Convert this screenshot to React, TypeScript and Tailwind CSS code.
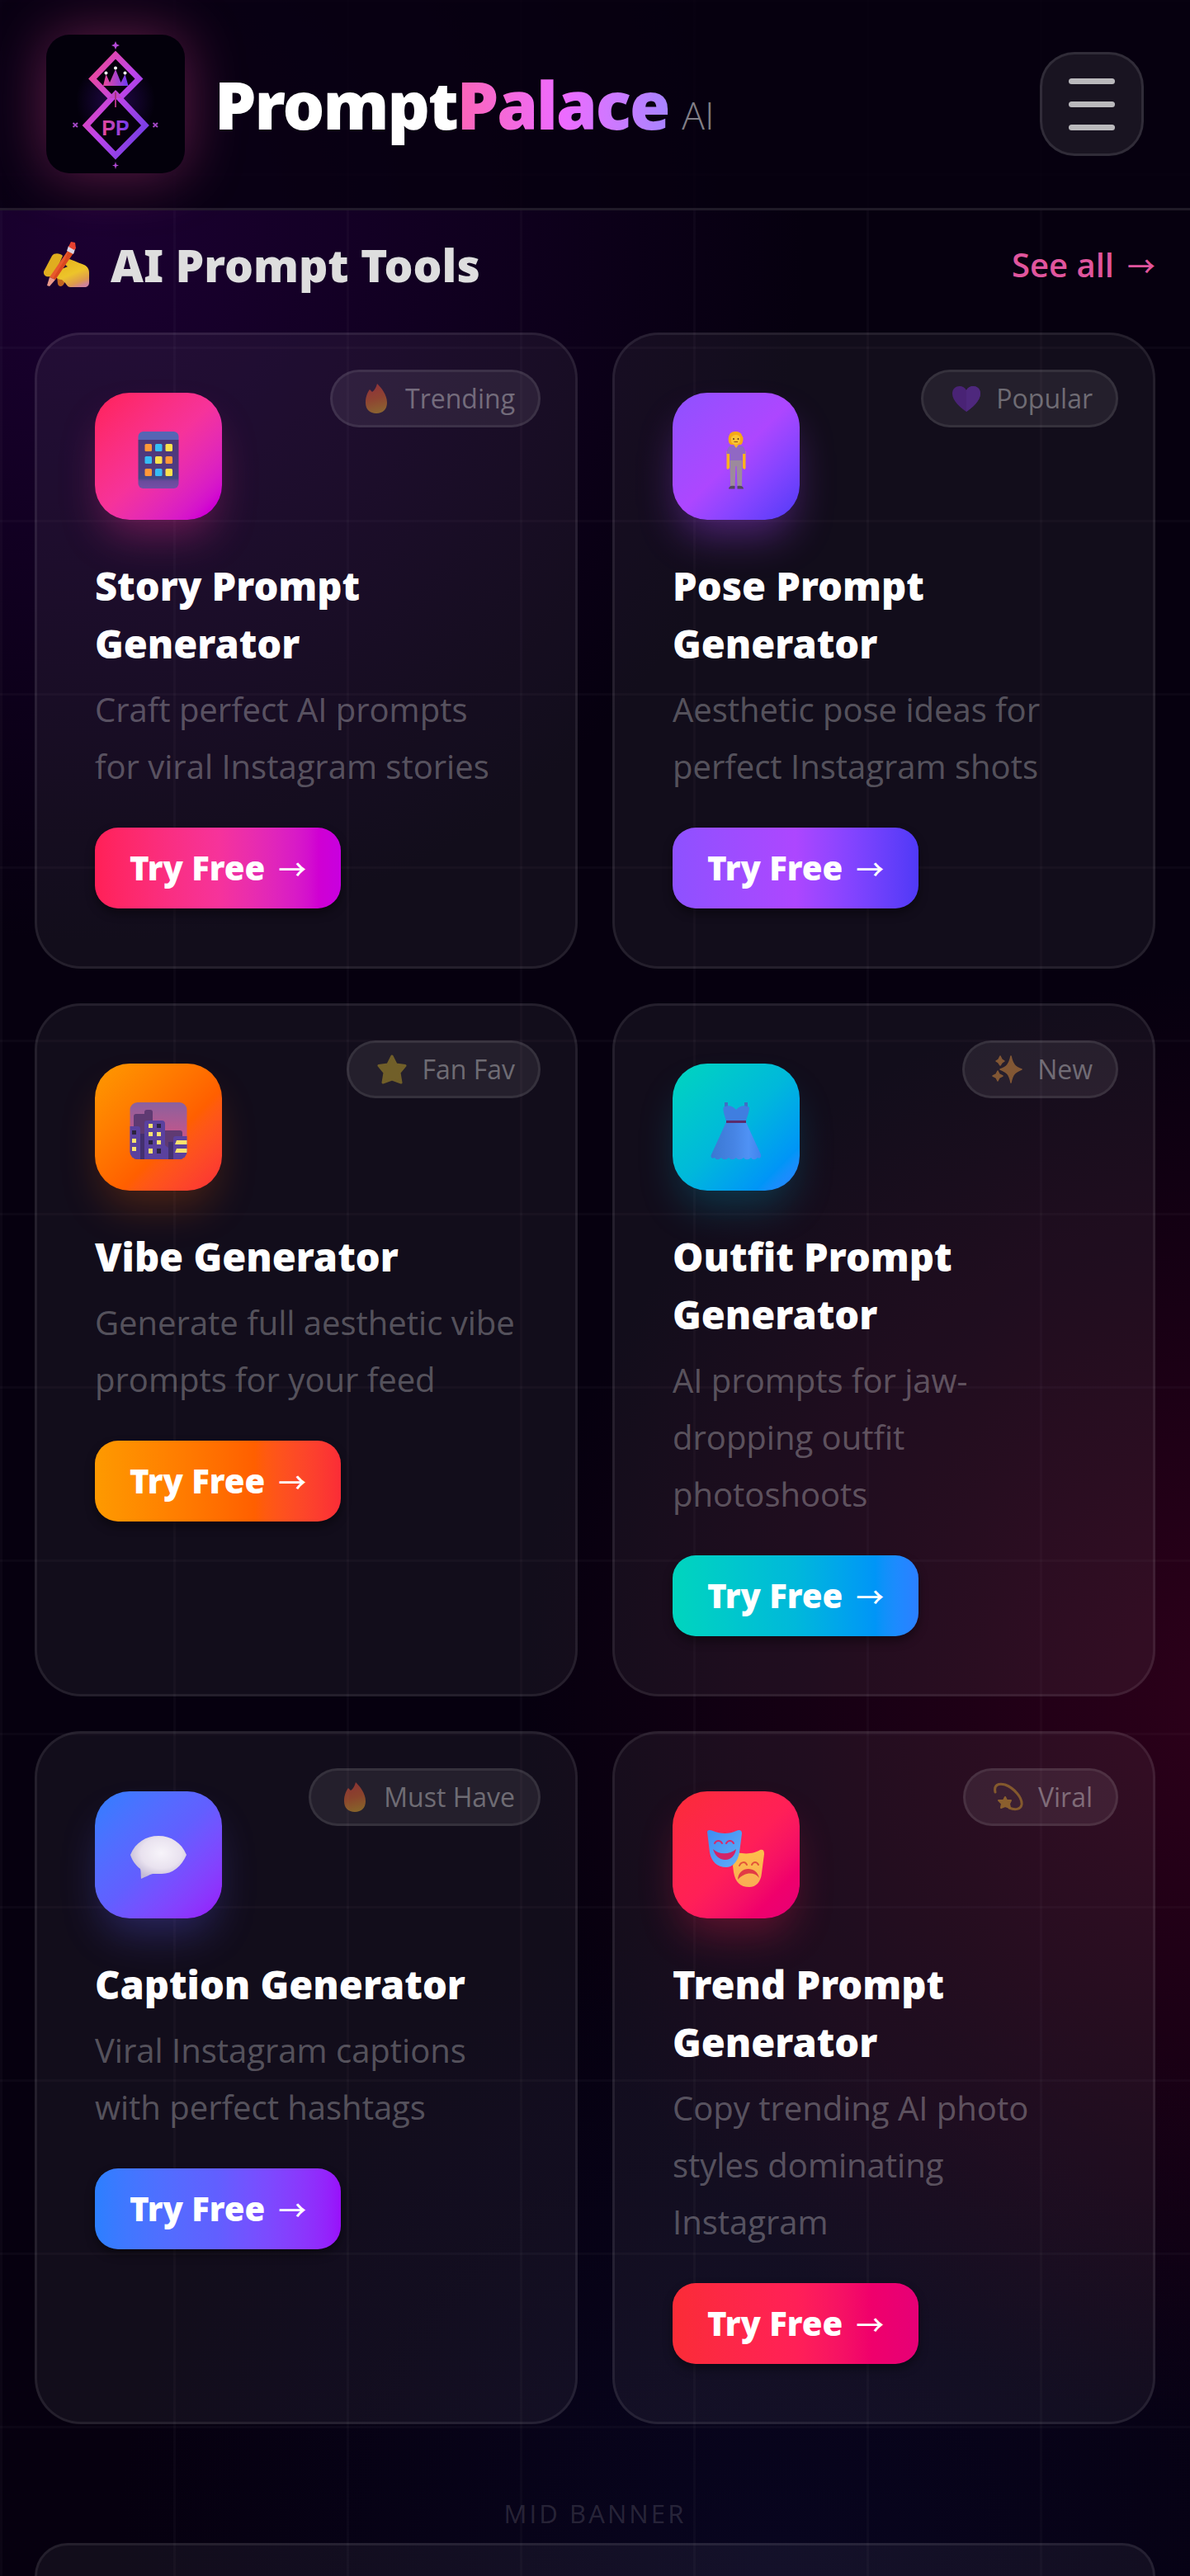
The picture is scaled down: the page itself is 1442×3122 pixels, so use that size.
import type { ReactNode } from 'react';

interface Tool {
  id: string;
  title: string;
  description: string;
  badge: string;
  badgeIcon: ReactNode;
  icon: ReactNode;
  iconClass: string;
  buttonClass: string;
}

function Logo() {
  return (
    <svg viewBox="0 0 168 168" className="h-full w-full" role="img" aria-label="PromptPalace logo">
      <defs>
        <linearGradient id="logo-stroke" gradientUnits="userSpaceOnUse" x1="44" y1="60" x2="124" y2="104">
          <stop offset="0" stopColor="#ec4899" />
          <stop offset="0.5" stopColor="#c044ea" />
          <stop offset="1" stopColor="#7c3fe4" />
        </linearGradient>
        <linearGradient id="logo-crown" x1="0" y1="0" x2="1" y2="0">
          <stop offset="0" stopColor="#ec4899" />
          <stop offset="1" stopColor="#6d3bf5" />
        </linearGradient>
        <radialGradient id="logo-glow">
          <stop offset="0" stopColor="#2a0a5c" stopOpacity="0.8" />
          <stop offset="1" stopColor="#2a0a5c" stopOpacity="0" />
        </radialGradient>
      </defs>
      <circle cx="84" cy="80" r="48" fill="url(#logo-glow)" />
      <path d="M84 24.500 L112.500 53.500 L84 82 L56 53.500 Z" fill="#05000d" stroke="url(#logo-stroke)" strokeWidth="7" />
      <path d="M84 72 L120 110 L84 146.500 L48.500 110 Z" fill="#05000d" stroke="url(#logo-stroke)" strokeWidth="7" />
      <path d="M69 62 L72.500 48 L77 58 L84 42 L90.500 58 L95.500 48 L99.500 62 Z" fill="url(#logo-crown)" />
      <circle cx="72.500" cy="46.500" r="2" fill="#fff" />
      <circle cx="84" cy="40.500" r="2" fill="#fff" />
      <circle cx="95.500" cy="46.500" r="2" fill="#fff" />
      <path d="M84 68 L92 77 L76 77 Z" fill="#c044c8" />
      <rect x="83" y="70" width="2" height="18" fill="#a8327e" />
      <text
        x="84"
        y="122"
        textAnchor="middle"
        fontFamily="Liberation Sans, sans-serif"
        fontWeight="700"
        fontSize="25"
        fill="url(#logo-crown)"
      >
        PP
      </text>
      <path d="M84 8 L85.500 11.500 L89 13 L85.500 14.500 L84 18 L82.500 14.500 L79 13 L82.500 11.500 Z" fill="#b34ad6" />
      <path d="M84 154 L85 157.500 L88 158.500 L85 159.500 L84 163 L83 159.500 L80 158.500 L83 157.500 Z" fill="#b34ad6" />
      <path d="M32.500 107 L38 112 M38 107 L32.500 112 M129.500 107 L135 112 M135 107 L129.500 112" stroke="#a347c4" strokeWidth="2" />
    </svg>
  );
}

function WritingHand() {
  return (
    <svg viewBox="0 0 56 56" className="h-14 w-14 shrink-0" aria-hidden="true">
      <defs>
        <linearGradient id="hand-skin" x1="0.200" y1="0" x2="0.700" y2="1">
          <stop offset="0" stopColor="#e5b21c" />
          <stop offset="0.550" stopColor="#edc42a" />
          <stop offset="0.850" stopColor="#dd9a4e" />
          <stop offset="1" stopColor="#d08398" />
        </linearGradient>
      </defs>
      <path d="M11 17 C14 13 21 14 24 17 L14 40 C8 44 0 43 1 36 Z" fill="#e0ad1f" />
      <path d="M17 42 L26 40 L26 50 C24 55 19 55 18 51 Z" fill="#c2661f" />
      <path
        d="M28 20 C34 21 42 25 50 28 C54 30 56 33 56 38 V49 C56 53 54 55 50 55 H33 C30 55 29 52 27 50 L23 46 C17 46 14 42 16 38 C18 34 26 32 30 30 C26 28 25 24 28 20 Z"
        fill="url(#hand-skin)"
      />
      <path d="M32 8 L38 12 L15 46 L8 43 Z" fill="#e8592c" />
      <path d="M32 8 L27 21 L12 45 L15 46 L38 12 Z" fill="#d9481f" />
      <path d="M31 5 L39 9 L37 15 L29 11 Z" fill="#d9d3e2" />
      <path d="M34 0 L39 1 L40 8 L38 10 L31 6 Z" fill="#e8412f" />
      <path d="M8 43 L15 46 L8 54 L5 53 Z" fill="#eb9a8c" />
    </svg>
  );
}

function Phone() {
  const colors = ['#ff9838', '#35bdf5', '#fbe24c', '#35bdf5', '#fbe24c', '#ff9838', '#ff9838', '#35bdf5', '#fbe24c'];
  return (
    <svg viewBox="0 0 72 72" className="h-18 w-18" aria-hidden="true">
      <defs>
        <linearGradient id="phone-body" x1="0" y1="0" x2="0" y2="1">
          <stop offset="0" stopColor="#5665b4" />
          <stop offset="0.140" stopColor="#5665b4" />
          <stop offset="0.150" stopColor="#4d3779" />
          <stop offset="0.650" stopColor="#4f3c80" />
          <stop offset="0.820" stopColor="#414a86" />
          <stop offset="0.870" stopColor="#6a4a9c" />
          <stop offset="1" stopColor="#7350a6" />
        </linearGradient>
      </defs>
      <rect x="11.500" y="2" width="49" height="69" rx="6" fill="url(#phone-body)" />
      {colors.map((color, i) => (
        <rect key={i} x={19.5 + (i % 3) * 12.5} y={17 + Math.floor(i / 3) * 15} width="8.500" height="9" rx="1.500" fill={color} />
      ))}
    </svg>
  );
}

function Person() {
  return (
    <svg viewBox="0 0 72 72" className="h-18 w-18" aria-hidden="true">
      <path d="M28 6 C29 1 42 0 43 7 C46 9 44 17 42 18 H30 C26 17 26 9 28 6 Z" fill="#f5a816" />
      <path d="M30 9 C33 5 39 5 41 9 V14 C39 19 32 19 30 14 Z" fill="#fbc432" />
      <circle cx="33" cy="11" r="0.900" fill="#4b2b20" />
      <circle cx="38.500" cy="11" r="0.900" fill="#4b2b20" />
      <path d="M33.500 14.500 H38" stroke="#8a4a20" strokeWidth="1" />
      <path d="M24.500 26 L28 26 V46 C26 49 24 48 24.500 44 Z M44 26 L47.500 26 V44 C48 48 46 49 44 46 Z" fill="#f9b31f" />
      <path d="M30 19 H42 C46 20 47 24 47.500 29 H43.500 V38 H28.500 V29 H24.500 C25 24 26 20 30 19 Z" fill="#9068c4" />
      <path d="M33 18 H39 L36 22 Z" fill="#f3b032" />
      <path d="M28.500 37 H43.500 L43 68 H37.500 L36.500 44 H35.500 L34.500 68 H29 Z" fill="#9c8a9c" />
      <path d="M27 71.500 C27 68 30 67 34.500 68 V71.500 Z M45 71.500 C45 68 42 67 37.500 68 V71.500 Z" fill="#54495c" />
    </svg>
  );
}

function City() {
  return (
    <svg viewBox="0 0 72 72" className="h-18 w-18" aria-hidden="true">
      <defs>
        <linearGradient id="city-sky" x1="0" y1="0" x2="0" y2="1">
          <stop offset="0" stopColor="#8a619e" />
          <stop offset="0.550" stopColor="#c0568c" />
          <stop offset="1" stopColor="#b04a80" />
        </linearGradient>
        <clipPath id="city-clip">
          <rect x="1.500" y="2" width="69" height="69" rx="9" />
        </clipPath>
      </defs>
      <g clipPath="url(#city-clip)">
        <rect x="1" y="1" width="71" height="71" fill="url(#city-sky)" />
        <path d="M6 19 Q6 16 9 16 H19 V14 Q19 11 22 11 H26 Q29 11 29 14 V72 H6 Z M42 36 H62 Q65 36 65 39 V72 H42 Z" fill="#5f3a72" />
        <path d="M1 31 H11 Q14 31 14 34 V72 H1 Z M19 27 Q19 24 22 24 H40 Q44 24 44 28 V54 L48 57 V72 H19 Z M54 46 Q54 43 57 43 H72 V72 H54 Z" fill="#5a419e" />
        <path d="M14 40 H19 V72 H14 Z M48 50 H54 V72 H48 Z" fill="#43306f" />
        <path
          d="M4 46 H9 V51 H4 Z M4 56 H9 V61 H4 Z M24 28 H29 V33 H24 Z M24 38 H29 V43 H24 Z M34 38 H39 V43 H34 Z M34 48 H39 V53 H34 Z M24 58 H29 V64 H24 Z M58 48 H72 V53 H56 Z M58 58 H72 V63 H56 Z"
          fill="#fbe36f"
        />
        <path d="M4 36 H9 V41 H4 Z M34 28 H39 V33 H34 Z M24 48 H29 V53 H24 Z M34 58 H39 V64 H34 Z" fill="#2c2440" />
      </g>
    </svg>
  );
}

function Dress() {
  return (
    <svg viewBox="0 0 72 72" className="h-18 w-18" aria-hidden="true">
      <defs>
        <linearGradient id="dress-skirt" x1="0" y1="0" x2="1" y2="0">
          <stop offset="0" stopColor="#3a78d2" />
          <stop offset="0.450" stopColor="#4684e4" />
          <stop offset="0.750" stopColor="#4f92f5" />
          <stop offset="1" stopColor="#3f83ee" />
        </linearGradient>
      </defs>
      <path d="M22 2 H26 V9 H22 Z M46 2 H50 V9 H46 Z" fill="#3f6fc4" />
      <path d="M20.500 8 C26 5 32 6 36 11 C40 6 46 5 52 8 C52 14 49 20 48 25 H24 C23 20 20 14 20.500 8 Z" fill="#3f7ee0" />
      <path
        d="M24 26 H48 L65 63 C68 68 65 71 62 69 C59 72 56 72 54 69 C51 72 47 72 45 69 C42 72 38 72 36 69 C33 72 30 72 27 69 C24 72 20 72 18 69 C15 72 12 72 10 69 C6 71 4 68 7 63 Z"
        fill="url(#dress-skirt)"
      />
      <path d="M24 24 H48 V27 H24 Z" fill="#5b2c6c" />
    </svg>
  );
}

function Bubble() {
  return (
    <svg viewBox="0 0 72 72" className="h-18 w-18" aria-hidden="true">
      <defs>
        <radialGradient id="bubble-fill" cx="0.550" cy="0.400" r="0.600">
          <stop offset="0" stopColor="#f7f4fa" />
          <stop offset="0.600" stopColor="#e9e2ef" />
          <stop offset="1" stopColor="#c3bbd6" />
        </radialGradient>
      </defs>
      <path
        d="M2 32 C8 17 21 9 36 9 C51 9 64 17 70 32 C64 46 53 55 40 55 H29 C25 56 20 59 15 61 C14.500 57 15 52 14 49 C9 45 4 39 2 32 Z"
        fill="url(#bubble-fill)"
      />
    </svg>
  );
}

function Masks() {
  return (
    <svg viewBox="0 0 72 72" className="h-18 w-18" aria-hidden="true">
      <defs>
        <linearGradient id="mask-sad" x1="0" y1="0" x2="0" y2="1">
          <stop offset="0" stopColor="#fdc04a" />
          <stop offset="1" stopColor="#f9ad55" />
        </linearGradient>
        <linearGradient id="mask-happy" x1="0" y1="0" x2="1" y2="1">
          <stop offset="0" stopColor="#3d8df2" />
          <stop offset="1" stopColor="#62aef8" />
        </linearGradient>
      </defs>
      <path d="M38 29 C48 32 59 30 65 26 C69 25 70 27 70 31 L67 54 C66 65 60 71 52 71 C41 71 35 65 33 53 L32 45 Z" fill="url(#mask-sad)" />
      <path d="M1 4 C2 1 5 2 8 3 C17 7 28 7 36 3 C40 1 43 2 43 6 L40 29 C38 41 31 47 24 47 C13 47 6 40 4 29 Z" fill="url(#mask-happy)" />
      <path d="M10 18 C12 14 17 14 19 18 M24 18 C26 14 31 14 33 18" fill="none" stroke="#d82a6a" strokeWidth="2" strokeLinecap="round" />
      <path d="M8 25 C15 32 28 32 36 25 C35 32 30 38 23 38 C15 38 10 32 8 25 Z" fill="#d32468" />
      <path d="M40 45 C42 40 47 40 49 44 M55 44 C57 40 61 40 63 44" fill="none" stroke="#e2553a" strokeWidth="2" strokeLinecap="round" />
      <path d="M38 62 C39 45 61 45 64 60 C58 52 46 53 38 62 Z" fill="#e23a45" />
    </svg>
  );
}

function Flame() {
  return (
    <svg viewBox="0 0 48 36" className="h-9 w-12 opacity-60" aria-hidden="true">
      <defs>
        <linearGradient id="flame-fill" x1="0.400" y1="0" x2="0.600" y2="1">
          <stop offset="0" stopColor="#cf4038" />
          <stop offset="0.500" stopColor="#cf5d2c" />
          <stop offset="1" stopColor="#c9942a" />
        </linearGradient>
      </defs>
      <path d="M26 0 C31 5 38 13 38 23 C38 31 33 36 25 36 C17 36 12 31 12 23 C12 16 14 11 17 7 L20 10 C23 8 25 4 26 0 Z" fill="url(#flame-fill)" />
    </svg>
  );
}

function Heart() {
  return (
    <svg viewBox="0 0 48 36" className="h-9 w-12 opacity-70" aria-hidden="true">
      <path d="M24 34 C17 29 7 21 7 12 C7 2 20 0 24 8 C28 0 41 2 41 12 C41 21 31 29 24 34 Z" fill="#5a2594" />
      <path d="M24 8 C28 0 41 2 41 12 C41 21 31 29 24 34 Z" fill="#602ca0" />
    </svg>
  );
}

function Star() {
  return (
    <svg viewBox="0 0 48 36" className="h-9 w-12 opacity-60" aria-hidden="true">
      <path
        d="M24 2 L29 12 L40 13.500 L33 22 L35 34 L24 30 L13 34 L15 22 L8 13.500 L19 12 Z"
        fill="#a58a28"
        stroke="#a58a28"
        strokeWidth="3"
        strokeLinejoin="round"
      />
    </svg>
  );
}

function Sparkles() {
  return (
    <svg viewBox="0 0 48 36" className="h-9 w-12 opacity-60" aria-hidden="true">
      <path
        d="M28 2 C30 12 33 15 41 18 C33 21 30 24 28 34 C26 24 23 21 15 18 C23 15 26 12 28 2 Z M15 2 L17 6 L20 8 L17 10 L15 13 L13 10 L10 8 L13 6 Z M12 20 L14 24 L18 26 L14 28 L12 32 L10 28 L6 26 L10 24 Z"
        fill="#bf7d3a"
        stroke="#bf7d3a"
        strokeWidth="1.500"
        strokeLinejoin="round"
      />
    </svg>
  );
}

function Dizzy() {
  return (
    <svg viewBox="0 0 48 36" className="h-9 w-12 opacity-60" aria-hidden="true">
      <path d="M8 12 C6 3 12 1 20 3 C31 7 41 19 40 27 C39 33 32 34 25 31" fill="none" stroke="#b5802a" strokeWidth="3" strokeLinecap="round" />
      <path d="M20 18 L22 22 L27 22 L25 26 L26 31 L20 29 L15 31 L16 26 L12 22 L18 22 Z" fill="#c08a2c" stroke="#c08a2c" strokeWidth="2" strokeLinejoin="round" />
    </svg>
  );
}

const tools: Tool[] = [
  {
    id: 'story',
    title: 'Story Prompt Generator',
    description: 'Craft perfect AI prompts for viral Instagram stories',
    badge: 'Trending',
    badgeIcon: <Flame />,
    icon: <Phone />,
    iconClass: 'from-rose-500 via-pink-500 to-fuchsia-600 shadow-[0_28px_50px_-10px_rgba(246,51,154,0.35)]',
    buttonClass: 'from-rose-500 via-pink-500 to-fuchsia-600',
  },
  {
    id: 'pose',
    title: 'Pose Prompt Generator',
    description: 'Aesthetic pose ideas for perfect Instagram shots',
    badge: 'Popular',
    badgeIcon: <Heart />,
    icon: <Person />,
    iconClass: 'from-violet-500 via-purple-500 to-indigo-600 shadow-[0_28px_50px_-10px_rgba(173,70,255,0.4)]',
    buttonClass: 'from-violet-500 via-purple-500 to-indigo-600',
  },
  {
    id: 'vibe',
    title: 'Vibe Generator',
    description: 'Generate full aesthetic vibe prompts for your feed',
    badge: 'Fan Fav',
    badgeIcon: <Star />,
    icon: <City />,
    iconClass: 'from-amber-500 via-[#ff5f00] via-60% to-red-500 shadow-[0_28px_50px_-10px_rgba(255,105,0,0.25)]',
    buttonClass: 'from-amber-500 via-[#ff5f00] via-65% to-red-500',
  },
  {
    id: 'outfit',
    title: 'Outfit Prompt Generator',
    description: 'AI prompts for jaw-dropping outfit photoshoots',
    badge: 'New',
    badgeIcon: <Sparkles />,
    icon: <Dress />,
    iconClass: 'from-teal-400 via-cyan-500 to-blue-500 shadow-[0_28px_50px_-10px_rgba(0,184,219,0.25)]',
    buttonClass: 'from-teal-400 via-cyan-500 to-blue-500',
  },
  {
    id: 'caption',
    title: 'Caption Generator',
    description: 'Viral Instagram captions with perfect hashtags',
    badge: 'Must Have',
    badgeIcon: <Flame />,
    icon: <Bubble />,
    iconClass: 'from-blue-500 via-indigo-500 to-purple-600 shadow-[0_28px_50px_-10px_rgba(97,95,255,0.3)]',
    buttonClass: 'from-blue-500 via-indigo-500 to-purple-600',
  },
  {
    id: 'trend',
    title: 'Trend Prompt Generator',
    description: 'Copy trending AI photo styles dominating Instagram',
    badge: 'Viral',
    badgeIcon: <Dizzy />,
    icon: <Masks />,
    iconClass: 'from-red-500 via-rose-500 to-pink-600 shadow-[0_28px_50px_-10px_rgba(255,32,86,0.3)]',
    buttonClass: 'from-red-500 via-rose-500 to-pink-600',
  },
];

function ToolCard({ tool }: { tool: Tool }) {
  return (
    <article className="relative rounded-[56px] border-[3px] border-white/8 bg-white/5 p-[70px]">
      <span className="absolute top-[42px] right-[42px] flex h-[70px] items-center gap-3 rounded-full border-[3px] border-white/8 bg-white/8 px-7 text-[32px] text-white/35">
        {tool.badgeIcon}
        {tool.badge}
      </span>

      <div className={`flex h-[154px] w-[154px] items-center justify-center rounded-[42px] bg-linear-to-br pt-2 ${tool.iconClass}`}>
        {tool.icon}
      </div>

      <h3 className="mt-[45px] font-['Noto_Sans'] text-[47px] leading-[70px] font-black text-white">{tool.title}</h3>
      <p className="mt-[10px] text-[40px] leading-[69px] text-white/30">{tool.description}</p>

      <button
        type="button"
        className={`mt-10 flex h-[98px] items-center gap-4 rounded-[28px] bg-linear-to-r px-[42px] font-['Noto_Sans'] text-[40px] font-black whitespace-nowrap text-white shadow-[0_6px_12px_rgba(0,0,0,0.4)] ${tool.buttonClass}`}
      >
        Try Free <span className="font-['Noto_Sans_CJK_SC'] text-[34px] font-medium">→</span>
      </button>
    </article>
  );
}

export default function App() {
  return (
    <div className="flex min-h-screen flex-col bg-[#06000f] bg-[linear-gradient(to_right,rgba(255,255,255,0.025)_3px,transparent_3px),linear-gradient(to_bottom,rgba(255,255,255,0.025)_3px,transparent_3px),radial-gradient(circle_at_8%_9%,#1b0031_0%,transparent_860px),radial-gradient(circle_at_105%_66%,#2e001a_0%,transparent_880px),radial-gradient(circle_at_65%_100%,#08051f_0%,transparent_800px)] bg-[size:210px_210px,210px_210px,auto,auto,auto] font-['Open_Sans',sans-serif]">
      <header className="flex items-center justify-between border-b-[3px] border-white/10 bg-[#06000f]/80 px-14 py-[42px]">
        <a href="#" className="flex items-center gap-9">
          <span className="block h-[168px] w-[168px] rounded-[28px] bg-[#03000b] shadow-[0_0_70px_rgba(236,72,153,0.4)]">
            <Logo />
          </span>
          <span className="flex items-baseline gap-4">
            <span className="font-['Noto_Sans'] text-[80px] leading-none font-black tracking-tight text-white">
              Prompt
              <span className="bg-linear-to-r from-pink-400 via-fuchsia-400 to-violet-400 bg-clip-text text-transparent">Palace</span>
            </span>
            <span className="text-[46px] leading-none font-light text-white/50">AI</span>
          </span>
        </a>
        <button
          type="button"
          aria-label="Open menu"
          className="flex h-[126px] w-[126px] flex-col items-center justify-center gap-[21px] rounded-[42px] border-[3px] border-white/10 bg-white/8"
        >
          <span className="h-[7px] w-14 rounded-full bg-white/70" />
          <span className="h-[7px] w-14 rounded-full bg-white/70" />
          <span className="h-[7px] w-14 rounded-full bg-white/70" />
        </button>
      </header>

      <main className="flex grow flex-col px-[42px]">
        <div className="flex items-center justify-between pt-[26px] pb-[42px] pl-[10px]">
          <h2 className="flex items-center gap-[26px] font-['Noto_Sans'] text-[55px] leading-[80px] font-black text-[#dedede]">
            <WritingHand />
            AI Prompt Tools
          </h2>
          <a href="#" className="flex items-center gap-4 text-[40px] font-semibold text-[#e0559d]">
            See all <span className="font-['Noto_Sans_CJK_SC'] text-[34px] font-medium">→</span>
          </a>
        </div>

        <section className="grid grid-cols-2 gap-[42px]">
          {tools.map((tool) => (
            <ToolCard key={tool.id} tool={tool} />
          ))}
        </section>

        <p className="mt-[84px] text-center text-[31px] leading-[48px] tracking-widest text-white/15">MID BANNER</p>
        <div className="mt-3 grow rounded-t-[42px] border-[3px] border-b-0 border-white/8 bg-white/5" />
      </main>
    </div>
  );
}
